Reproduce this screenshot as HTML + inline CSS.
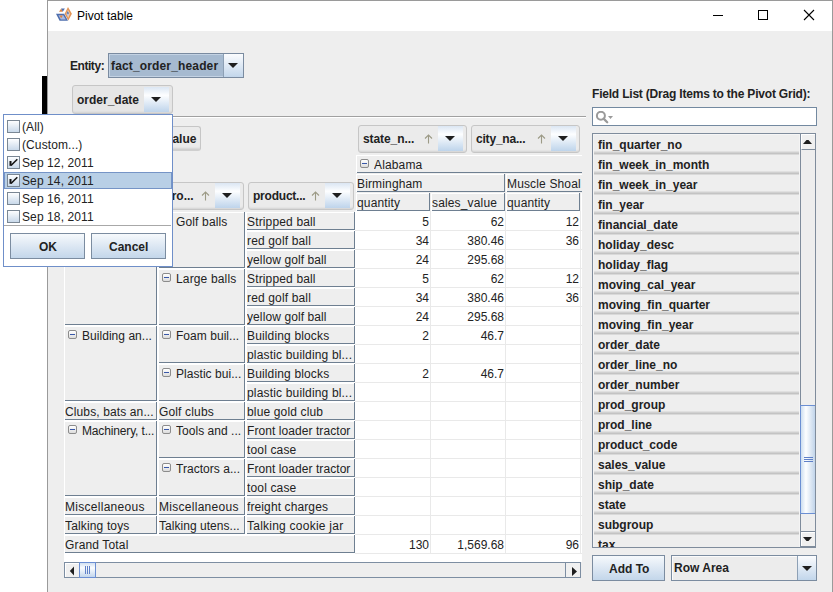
<!DOCTYPE html>
<html><head><meta charset="utf-8">
<style>
*{box-sizing:border-box;margin:0;padding:0}
html,body{width:833px;height:592px;overflow:hidden;background:#fff;font-family:"Liberation Sans",sans-serif;font-size:12px;color:#222}
.a{position:absolute}
.t{position:absolute;white-space:nowrap;line-height:14px}
.b{font-weight:bold}
#win{left:47px;top:0;width:786px;height:600px;border:1px solid #9a9a9a;border-bottom:none;background:#fff}
#content{left:48px;top:31px;width:784px;height:561px;background:#eeeeee}
.fbtn{position:absolute;border:1px solid #c6c6c6;border-radius:3px;background:#ebebeb;box-shadow:inset 0 -2px 2px -1px #d2d2d2}
.arr2{position:absolute;background:linear-gradient(#fbfcfe,#c2d6eb)}
.arr{position:absolute;background:linear-gradient(#dbe6f3 0%,#fdfeff 33%,#bed4eb 100%)}
.tri{position:absolute;width:0;height:0;border-left:5px solid transparent;border-right:5px solid transparent;border-top:5px solid #1e1e1e}
.up{position:absolute;color:#8c8c78;font-size:12px}
.hc{position:absolute;background:#eeeeee;border-top:1px solid #fff;border-left:1px solid #fff;border-right:1px solid #6e7f91;border-bottom:1px solid #6e7f91;overflow:hidden;white-space:nowrap;line-height:14px}
.ex{position:absolute;width:9px;height:9px;border:1px solid #8c8c8c;border-radius:2px;background:linear-gradient(#fff,#dcdcdc)}
.ex:after{content:"";position:absolute;left:1px;top:3px;width:5px;height:1px;background:#3857a8}
.num{position:absolute;text-align:right;line-height:14px;white-space:nowrap}
.item{position:absolute;left:594px;width:205px;height:20px;background:linear-gradient(#d9d9d9 1px,#eeeeee 1px,#eeeeee 17px,#e0e0e0 17px,#e0e0e0 18px,#d0d0d0 18px,#d0d0d0 19px,#c3c3c3 19px);font-weight:bold;line-height:14px}
.item span{position:absolute;left:4px;top:4px}
.cb{position:absolute;width:13px;height:13px;border:1px solid #7a8794;background:linear-gradient(#fdfeff,#c9d9ea)}
</style></head><body>
<!-- black bar at left -->
<div class="a" style="left:42px;top:76px;width:6px;height:38px;background:#000"></div>
<div id="win" class="a"></div>
<div id="content" class="a"></div>

<!-- title bar -->
<svg class="a" style="left:55px;top:6px" width="18" height="16" viewBox="0 0 18 16">
 <polygon points="1,7.8 9.2,7.8 13,14.8 4.6,14.8" fill="#4f6fae"/>
 <polygon points="3.4,9.2 8.3,9.2 10.8,13.5 5.8,13.5" fill="#a9b9df"/>
 <polygon points="4.6,9.6 7.8,9.6 6.2,12.3" fill="#e0823e"/>
 <polygon points="13,1.1 16.9,7.8 13.3,14.5 9.6,7.8" fill="#e39456"/>
 <polygon points="13,3.8 15,7.8 13.2,12 11.2,7.8" fill="#f6d2b0"/>
 <polygon points="11.5,7.8 14.2,7.8 12.8,5" fill="#5071b0"/>
 <polygon points="11.7,8.1 14,8.1 12.8,10.6" fill="#b4c2e6"/>
 <polygon points="4,5.8 6.2,2.6 7.8,5.8" fill="#e0843f"/>
 <polygon points="6.1,2.6 9.9,2.6 7.8,5.8" fill="#5071b0"/>
</svg>
<div class="t" style="left:77px;top:9px;font-size:12px;color:#000">Pivot table</div>
<div class="a" style="left:713px;top:15px;width:10px;height:1px;background:#000"></div>
<div class="a" style="left:758px;top:10px;width:10px;height:10px;border:1px solid #000"></div>
<svg class="a" style="left:803px;top:9px" width="12" height="12" viewBox="0 0 12 12"><path d="M1 1 L11 11 M11 1 L1 11" stroke="#000" stroke-width="1.1"/></svg>

<!-- Entity -->
<div class="t b" style="left:70px;top:59px;letter-spacing:-0.45px">Entity:</div>
<div class="a" style="left:108px;top:53px;width:136px;height:25px;border:1px solid #7a8ba0;background:#a6bad0;box-shadow:inset 0 0 0 1px #c3d2e3"></div>
<div class="arr2" style="left:223px;top:54px;width:20px;height:23px;border-left:1px solid #8da0b5"></div>
<div class="tri" style="left:228px;top:63px"></div>
<div class="t b" style="left:111px;top:59px;letter-spacing:0.15px">fact_order_header</div>

<!-- order_date filter button -->
<div class="fbtn" style="left:72px;top:85px;width:101px;height:29px;background:#e6e6e6"></div>
<div class="arr" style="left:144px;top:87px;width:25px;height:25px"></div>
<div class="tri" style="left:151px;top:97px"></div>
<div class="t b" style="left:77px;top:93px">order_date</div>

<!-- separator line -->
<div class="a" style="left:48px;top:116px;width:538px;height:1px;background:#a0a0a0"></div>
<div class="a" style="left:48px;top:117px;width:538px;height:1px;background:#fff"></div>

<!-- data field button (hidden partly) -->
<div class="fbtn" style="left:110px;top:126px;width:91px;height:25px;border-bottom:2px solid #cfcfcf"></div>
<div class="t b" style="left:129px;top:132px">sales_value</div>

<!-- column field buttons -->
<div class="fbtn" style="left:358px;top:125px;width:109px;height:28px"></div>
<div class="arr" style="left:438px;top:126px;width:25px;height:25px"></div>
<div class="tri" style="left:445px;top:136px"></div>
<div class="t b" style="left:363px;top:132px;letter-spacing:-0.08px">state_n...</div>
<svg class="a" style="left:424px;top:134px" width="9" height="10" viewBox="0 0 9 10"><path d="M4.5 1 L4.5 9.5 M1 4.5 L4.5 1 L8 4.5" fill="none" stroke="#9c9a86" stroke-width="1.1"/></svg>

<div class="fbtn" style="left:471px;top:125px;width:109px;height:28px"></div>
<div class="arr" style="left:551px;top:126px;width:25px;height:25px"></div>
<div class="tri" style="left:558px;top:136px"></div>
<div class="t b" style="left:476px;top:132px;letter-spacing:-0.2px">city_na...</div>
<svg class="a" style="left:537px;top:134px" width="9" height="10" viewBox="0 0 9 10"><path d="M4.5 1 L4.5 9.5 M1 4.5 L4.5 1 L8 4.5" fill="none" stroke="#9c9a86" stroke-width="1.1"/></svg>

<!-- row field buttons -->
<div class="fbtn" style="left:138px;top:182px;width:106px;height:28px"></div>
<div class="arr" style="left:215px;top:183px;width:25px;height:25px"></div>
<div class="tri" style="left:222px;top:193px"></div>
<div class="t b" style="left:143px;top:189px">subgro...</div>
<svg class="a" style="left:201px;top:191px" width="9" height="10" viewBox="0 0 9 10"><path d="M4.5 1 L4.5 9.5 M1 4.5 L4.5 1 L8 4.5" fill="none" stroke="#9c9a86" stroke-width="1.1"/></svg>

<div class="fbtn" style="left:248px;top:182px;width:106px;height:28px"></div>
<div class="arr" style="left:325px;top:183px;width:25px;height:25px"></div>
<div class="tri" style="left:332px;top:193px"></div>
<div class="t b" style="left:253px;top:189px;letter-spacing:-0.22px">product...</div>
<svg class="a" style="left:311px;top:191px" width="9" height="10" viewBox="0 0 9 10"><path d="M4.5 1 L4.5 9.5 M1 4.5 L4.5 1 L8 4.5" fill="none" stroke="#9c9a86" stroke-width="1.1"/></svg>

<div class="a" style="left:64px;top:211px;width:518px;height:351px;background:#fff"></div><div class="a" style="left:355px;top:230px;width:227px;height:1px;background:#e9e9e9"></div><div class="a" style="left:355px;top:249px;width:227px;height:1px;background:#e9e9e9"></div><div class="a" style="left:355px;top:268px;width:227px;height:1px;background:#e9e9e9"></div><div class="a" style="left:355px;top:287px;width:227px;height:1px;background:#e9e9e9"></div><div class="a" style="left:355px;top:306px;width:227px;height:1px;background:#e9e9e9"></div><div class="a" style="left:355px;top:325px;width:227px;height:1px;background:#e9e9e9"></div><div class="a" style="left:355px;top:344px;width:227px;height:1px;background:#e9e9e9"></div><div class="a" style="left:355px;top:363px;width:227px;height:1px;background:#e9e9e9"></div><div class="a" style="left:355px;top:382px;width:227px;height:1px;background:#e9e9e9"></div><div class="a" style="left:355px;top:401px;width:227px;height:1px;background:#e9e9e9"></div><div class="a" style="left:355px;top:420px;width:227px;height:1px;background:#e9e9e9"></div><div class="a" style="left:355px;top:439px;width:227px;height:1px;background:#e9e9e9"></div><div class="a" style="left:355px;top:458px;width:227px;height:1px;background:#e9e9e9"></div><div class="a" style="left:355px;top:477px;width:227px;height:1px;background:#e9e9e9"></div><div class="a" style="left:355px;top:496px;width:227px;height:1px;background:#e9e9e9"></div><div class="a" style="left:355px;top:515px;width:227px;height:1px;background:#e9e9e9"></div><div class="a" style="left:355px;top:534px;width:227px;height:1px;background:#e9e9e9"></div><div class="a" style="left:355px;top:553px;width:227px;height:1px;background:#e9e9e9"></div><div class="a" style="left:430px;top:211px;width:1px;height:343px;background:#e9e9e9"></div><div class="a" style="left:505px;top:211px;width:1px;height:343px;background:#e9e9e9"></div><div class="a" style="left:580px;top:211px;width:1px;height:343px;background:#e9e9e9"></div><div class="a" style="left:355px;top:154px;width:227px;height:57px;overflow:hidden"><div class="a" style="left:1px;top:1px;width:299px;height:18px;background:#fff"></div><div class="a" style="left:2px;top:1px;width:298px;height:18px;background:#6e7f91"></div><div class="a" style="left:2px;top:1px;width:297px;height:1px;background:#fff"></div><div class="a" style="left:2px;top:2px;width:297px;height:16px;background:#eeeeee"></div><div class="ex" style="left:5px;top:5px"></div><div class="t" style="left:19px;top:4px;width:280px;overflow:hidden;letter-spacing:0.15px">Alabama</div><div class="a" style="left:1px;top:20px;width:149px;height:18px;background:#fff"></div><div class="a" style="left:2px;top:20px;width:148px;height:18px;background:#6e7f91"></div><div class="a" style="left:2px;top:20px;width:147px;height:1px;background:#fff"></div><div class="a" style="left:2px;top:21px;width:147px;height:16px;background:#eeeeee"></div><div class="t" style="left:2px;top:23px;width:147px;overflow:hidden;letter-spacing:0.15px">Birmingham</div><div class="a" style="left:151px;top:20px;width:149px;height:18px;background:#fff"></div><div class="a" style="left:152px;top:20px;width:148px;height:18px;background:#6e7f91"></div><div class="a" style="left:152px;top:20px;width:147px;height:1px;background:#fff"></div><div class="a" style="left:152px;top:21px;width:147px;height:16px;background:#eeeeee"></div><div class="t" style="left:152px;top:23px;width:147px;overflow:hidden;letter-spacing:0.15px">Muscle Shoal</div><div class="a" style="left:1px;top:39px;width:74px;height:18px;background:#fff"></div><div class="a" style="left:2px;top:39px;width:73px;height:18px;background:#6e7f91"></div><div class="a" style="left:2px;top:39px;width:72px;height:1px;background:#fff"></div><div class="a" style="left:2px;top:40px;width:72px;height:16px;background:#eeeeee"></div><div class="t" style="left:2px;top:42px;width:72px;overflow:hidden;letter-spacing:0.15px">quantity</div><div class="a" style="left:76px;top:39px;width:74px;height:18px;background:#fff"></div><div class="a" style="left:77px;top:39px;width:73px;height:18px;background:#6e7f91"></div><div class="a" style="left:77px;top:39px;width:72px;height:1px;background:#fff"></div><div class="a" style="left:77px;top:40px;width:72px;height:16px;background:#eeeeee"></div><div class="t" style="left:77px;top:42px;width:72px;overflow:hidden;letter-spacing:0.15px">sales_value</div><div class="a" style="left:151px;top:39px;width:74px;height:18px;background:#fff"></div><div class="a" style="left:152px;top:39px;width:73px;height:18px;background:#6e7f91"></div><div class="a" style="left:152px;top:39px;width:72px;height:1px;background:#fff"></div><div class="a" style="left:152px;top:40px;width:72px;height:16px;background:#eeeeee"></div><div class="t" style="left:152px;top:42px;width:72px;overflow:hidden;letter-spacing:0.15px">quantity</div><div class="a" style="left:226px;top:39px;width:74px;height:18px;background:#fff"></div><div class="a" style="left:227px;top:39px;width:73px;height:18px;background:#6e7f91"></div><div class="a" style="left:227px;top:39px;width:72px;height:1px;background:#fff"></div><div class="a" style="left:227px;top:40px;width:72px;height:16px;background:#eeeeee"></div><div class="t" style="left:227px;top:42px;width:72px;overflow:hidden;letter-spacing:0.15px">sales_value</div></div><div class="a" style="left:64px;top:212px;width:93px;height:113px;background:#fff"></div><div class="a" style="left:65px;top:212px;width:92px;height:113px;background:#6e7f91"></div><div class="a" style="left:65px;top:212px;width:91px;height:1px;background:#fff"></div><div class="a" style="left:65px;top:213px;width:91px;height:111px;background:#eeeeee"></div><div class="ex" style="left:68px;top:216px"></div><div class="t" style="left:82px;top:215px;width:74px;overflow:hidden;letter-spacing:0.15px">Balls</div><div class="a" style="left:64px;top:326px;width:93px;height:75px;background:#fff"></div><div class="a" style="left:65px;top:326px;width:92px;height:75px;background:#6e7f91"></div><div class="a" style="left:65px;top:326px;width:91px;height:1px;background:#fff"></div><div class="a" style="left:65px;top:327px;width:91px;height:73px;background:#eeeeee"></div><div class="ex" style="left:68px;top:330px"></div><div class="t" style="left:82px;top:329px;width:74px;overflow:hidden;letter-spacing:0.04px">Building an...</div><div class="a" style="left:64px;top:402px;width:93px;height:18px;background:#fff"></div><div class="a" style="left:65px;top:402px;width:92px;height:18px;background:#6e7f91"></div><div class="a" style="left:65px;top:402px;width:91px;height:1px;background:#fff"></div><div class="a" style="left:65px;top:403px;width:91px;height:16px;background:#eeeeee"></div><div class="t" style="left:65px;top:405px;width:91px;overflow:hidden;letter-spacing:0.12px">Clubs, bats an...</div><div class="a" style="left:64px;top:421px;width:93px;height:75px;background:#fff"></div><div class="a" style="left:65px;top:421px;width:92px;height:75px;background:#6e7f91"></div><div class="a" style="left:65px;top:421px;width:91px;height:1px;background:#fff"></div><div class="a" style="left:65px;top:422px;width:91px;height:73px;background:#eeeeee"></div><div class="ex" style="left:68px;top:425px"></div><div class="t" style="left:82px;top:424px;width:74px;overflow:hidden;letter-spacing:-0.15px">Machinery, t...</div><div class="a" style="left:64px;top:497px;width:93px;height:18px;background:#fff"></div><div class="a" style="left:65px;top:497px;width:92px;height:18px;background:#6e7f91"></div><div class="a" style="left:65px;top:497px;width:91px;height:1px;background:#fff"></div><div class="a" style="left:65px;top:498px;width:91px;height:16px;background:#eeeeee"></div><div class="t" style="left:65px;top:500px;width:91px;overflow:hidden;letter-spacing:0.28px">Miscellaneous</div><div class="a" style="left:64px;top:516px;width:93px;height:18px;background:#fff"></div><div class="a" style="left:65px;top:516px;width:92px;height:18px;background:#6e7f91"></div><div class="a" style="left:65px;top:516px;width:91px;height:1px;background:#fff"></div><div class="a" style="left:65px;top:517px;width:91px;height:16px;background:#eeeeee"></div><div class="t" style="left:65px;top:519px;width:91px;overflow:hidden;letter-spacing:0.15px">Talking toys</div><div class="a" style="left:158px;top:212px;width:87px;height:56px;background:#fff"></div><div class="a" style="left:159px;top:212px;width:86px;height:56px;background:#6e7f91"></div><div class="a" style="left:159px;top:212px;width:85px;height:1px;background:#fff"></div><div class="a" style="left:159px;top:213px;width:85px;height:54px;background:#eeeeee"></div><div class="ex" style="left:162px;top:216px"></div><div class="t" style="left:176px;top:215px;width:68px;overflow:hidden;letter-spacing:0.15px">Golf balls</div><div class="a" style="left:158px;top:269px;width:87px;height:56px;background:#fff"></div><div class="a" style="left:159px;top:269px;width:86px;height:56px;background:#6e7f91"></div><div class="a" style="left:159px;top:269px;width:85px;height:1px;background:#fff"></div><div class="a" style="left:159px;top:270px;width:85px;height:54px;background:#eeeeee"></div><div class="ex" style="left:162px;top:273px"></div><div class="t" style="left:176px;top:272px;width:68px;overflow:hidden;letter-spacing:0.15px">Large balls</div><div class="a" style="left:158px;top:326px;width:87px;height:37px;background:#fff"></div><div class="a" style="left:159px;top:326px;width:86px;height:37px;background:#6e7f91"></div><div class="a" style="left:159px;top:326px;width:85px;height:1px;background:#fff"></div><div class="a" style="left:159px;top:327px;width:85px;height:35px;background:#eeeeee"></div><div class="ex" style="left:162px;top:330px"></div><div class="t" style="left:176px;top:329px;width:68px;overflow:hidden;letter-spacing:0.04px">Foam buil...</div><div class="a" style="left:158px;top:364px;width:87px;height:37px;background:#fff"></div><div class="a" style="left:159px;top:364px;width:86px;height:37px;background:#6e7f91"></div><div class="a" style="left:159px;top:364px;width:85px;height:1px;background:#fff"></div><div class="a" style="left:159px;top:365px;width:85px;height:35px;background:#eeeeee"></div><div class="ex" style="left:162px;top:368px"></div><div class="t" style="left:176px;top:367px;width:68px;overflow:hidden;letter-spacing:0.04px">Plastic bui...</div><div class="a" style="left:158px;top:402px;width:87px;height:18px;background:#fff"></div><div class="a" style="left:159px;top:402px;width:86px;height:18px;background:#6e7f91"></div><div class="a" style="left:159px;top:402px;width:85px;height:1px;background:#fff"></div><div class="a" style="left:159px;top:403px;width:85px;height:16px;background:#eeeeee"></div><div class="t" style="left:159px;top:405px;width:85px;overflow:hidden;letter-spacing:0.15px">Golf clubs</div><div class="a" style="left:158px;top:421px;width:87px;height:37px;background:#fff"></div><div class="a" style="left:159px;top:421px;width:86px;height:37px;background:#6e7f91"></div><div class="a" style="left:159px;top:421px;width:85px;height:1px;background:#fff"></div><div class="a" style="left:159px;top:422px;width:85px;height:35px;background:#eeeeee"></div><div class="ex" style="left:162px;top:425px"></div><div class="t" style="left:176px;top:424px;width:68px;overflow:hidden;letter-spacing:0.04px">Tools and ...</div><div class="a" style="left:158px;top:459px;width:87px;height:37px;background:#fff"></div><div class="a" style="left:159px;top:459px;width:86px;height:37px;background:#6e7f91"></div><div class="a" style="left:159px;top:459px;width:85px;height:1px;background:#fff"></div><div class="a" style="left:159px;top:460px;width:85px;height:35px;background:#eeeeee"></div><div class="ex" style="left:162px;top:463px"></div><div class="t" style="left:176px;top:462px;width:68px;overflow:hidden;letter-spacing:0.04px">Tractors a...</div><div class="a" style="left:158px;top:497px;width:87px;height:18px;background:#fff"></div><div class="a" style="left:159px;top:497px;width:86px;height:18px;background:#6e7f91"></div><div class="a" style="left:159px;top:497px;width:85px;height:1px;background:#fff"></div><div class="a" style="left:159px;top:498px;width:85px;height:16px;background:#eeeeee"></div><div class="t" style="left:159px;top:500px;width:85px;overflow:hidden;letter-spacing:0.28px">Miscellaneous</div><div class="a" style="left:158px;top:516px;width:87px;height:18px;background:#fff"></div><div class="a" style="left:159px;top:516px;width:86px;height:18px;background:#6e7f91"></div><div class="a" style="left:159px;top:516px;width:85px;height:1px;background:#fff"></div><div class="a" style="left:159px;top:517px;width:85px;height:16px;background:#eeeeee"></div><div class="t" style="left:159px;top:519px;width:85px;overflow:hidden;letter-spacing:0.04px">Talking utens...</div><div class="a" style="left:246px;top:212px;width:109px;height:18px;background:#fff"></div><div class="a" style="left:247px;top:212px;width:108px;height:18px;background:#6e7f91"></div><div class="a" style="left:247px;top:212px;width:107px;height:1px;background:#fff"></div><div class="a" style="left:247px;top:213px;width:107px;height:16px;background:#eeeeee"></div><div class="t" style="left:247px;top:215px;width:107px;overflow:hidden;letter-spacing:0.15px">Stripped ball</div><div class="a" style="left:246px;top:231px;width:109px;height:18px;background:#fff"></div><div class="a" style="left:247px;top:231px;width:108px;height:18px;background:#6e7f91"></div><div class="a" style="left:247px;top:231px;width:107px;height:1px;background:#fff"></div><div class="a" style="left:247px;top:232px;width:107px;height:16px;background:#eeeeee"></div><div class="t" style="left:247px;top:234px;width:107px;overflow:hidden;letter-spacing:0.15px">red golf ball</div><div class="a" style="left:246px;top:250px;width:109px;height:18px;background:#fff"></div><div class="a" style="left:247px;top:250px;width:108px;height:18px;background:#6e7f91"></div><div class="a" style="left:247px;top:250px;width:107px;height:1px;background:#fff"></div><div class="a" style="left:247px;top:251px;width:107px;height:16px;background:#eeeeee"></div><div class="t" style="left:247px;top:253px;width:107px;overflow:hidden;letter-spacing:0.1px">yellow golf ball</div><div class="a" style="left:246px;top:269px;width:109px;height:18px;background:#fff"></div><div class="a" style="left:247px;top:269px;width:108px;height:18px;background:#6e7f91"></div><div class="a" style="left:247px;top:269px;width:107px;height:1px;background:#fff"></div><div class="a" style="left:247px;top:270px;width:107px;height:16px;background:#eeeeee"></div><div class="t" style="left:247px;top:272px;width:107px;overflow:hidden;letter-spacing:0.15px">Stripped ball</div><div class="a" style="left:246px;top:288px;width:109px;height:18px;background:#fff"></div><div class="a" style="left:247px;top:288px;width:108px;height:18px;background:#6e7f91"></div><div class="a" style="left:247px;top:288px;width:107px;height:1px;background:#fff"></div><div class="a" style="left:247px;top:289px;width:107px;height:16px;background:#eeeeee"></div><div class="t" style="left:247px;top:291px;width:107px;overflow:hidden;letter-spacing:0.15px">red golf ball</div><div class="a" style="left:246px;top:307px;width:109px;height:18px;background:#fff"></div><div class="a" style="left:247px;top:307px;width:108px;height:18px;background:#6e7f91"></div><div class="a" style="left:247px;top:307px;width:107px;height:1px;background:#fff"></div><div class="a" style="left:247px;top:308px;width:107px;height:16px;background:#eeeeee"></div><div class="t" style="left:247px;top:310px;width:107px;overflow:hidden;letter-spacing:0.1px">yellow golf ball</div><div class="a" style="left:246px;top:326px;width:109px;height:18px;background:#fff"></div><div class="a" style="left:247px;top:326px;width:108px;height:18px;background:#6e7f91"></div><div class="a" style="left:247px;top:326px;width:107px;height:1px;background:#fff"></div><div class="a" style="left:247px;top:327px;width:107px;height:16px;background:#eeeeee"></div><div class="t" style="left:247px;top:329px;width:107px;overflow:hidden;letter-spacing:0.15px">Building blocks</div><div class="a" style="left:246px;top:345px;width:109px;height:18px;background:#fff"></div><div class="a" style="left:247px;top:345px;width:108px;height:18px;background:#6e7f91"></div><div class="a" style="left:247px;top:345px;width:107px;height:1px;background:#fff"></div><div class="a" style="left:247px;top:346px;width:107px;height:16px;background:#eeeeee"></div><div class="t" style="left:247px;top:348px;width:107px;overflow:hidden;letter-spacing:0.17px">plastic building bl...</div><div class="a" style="left:246px;top:364px;width:109px;height:18px;background:#fff"></div><div class="a" style="left:247px;top:364px;width:108px;height:18px;background:#6e7f91"></div><div class="a" style="left:247px;top:364px;width:107px;height:1px;background:#fff"></div><div class="a" style="left:247px;top:365px;width:107px;height:16px;background:#eeeeee"></div><div class="t" style="left:247px;top:367px;width:107px;overflow:hidden;letter-spacing:0.15px">Building blocks</div><div class="a" style="left:246px;top:383px;width:109px;height:18px;background:#fff"></div><div class="a" style="left:247px;top:383px;width:108px;height:18px;background:#6e7f91"></div><div class="a" style="left:247px;top:383px;width:107px;height:1px;background:#fff"></div><div class="a" style="left:247px;top:384px;width:107px;height:16px;background:#eeeeee"></div><div class="t" style="left:247px;top:386px;width:107px;overflow:hidden;letter-spacing:0.17px">plastic building bl...</div><div class="a" style="left:246px;top:402px;width:109px;height:18px;background:#fff"></div><div class="a" style="left:247px;top:402px;width:108px;height:18px;background:#6e7f91"></div><div class="a" style="left:247px;top:402px;width:107px;height:1px;background:#fff"></div><div class="a" style="left:247px;top:403px;width:107px;height:16px;background:#eeeeee"></div><div class="t" style="left:247px;top:405px;width:107px;overflow:hidden;letter-spacing:0.15px">blue gold club</div><div class="a" style="left:246px;top:421px;width:109px;height:18px;background:#fff"></div><div class="a" style="left:247px;top:421px;width:108px;height:18px;background:#6e7f91"></div><div class="a" style="left:247px;top:421px;width:107px;height:1px;background:#fff"></div><div class="a" style="left:247px;top:422px;width:107px;height:16px;background:#eeeeee"></div><div class="t" style="left:247px;top:424px;width:107px;overflow:hidden;letter-spacing:0.07px">Front loader tractor</div><div class="a" style="left:246px;top:440px;width:109px;height:18px;background:#fff"></div><div class="a" style="left:247px;top:440px;width:108px;height:18px;background:#6e7f91"></div><div class="a" style="left:247px;top:440px;width:107px;height:1px;background:#fff"></div><div class="a" style="left:247px;top:441px;width:107px;height:16px;background:#eeeeee"></div><div class="t" style="left:247px;top:443px;width:107px;overflow:hidden;letter-spacing:0.15px">tool case</div><div class="a" style="left:246px;top:459px;width:109px;height:18px;background:#fff"></div><div class="a" style="left:247px;top:459px;width:108px;height:18px;background:#6e7f91"></div><div class="a" style="left:247px;top:459px;width:107px;height:1px;background:#fff"></div><div class="a" style="left:247px;top:460px;width:107px;height:16px;background:#eeeeee"></div><div class="t" style="left:247px;top:462px;width:107px;overflow:hidden;letter-spacing:0.07px">Front loader tractor</div><div class="a" style="left:246px;top:478px;width:109px;height:18px;background:#fff"></div><div class="a" style="left:247px;top:478px;width:108px;height:18px;background:#6e7f91"></div><div class="a" style="left:247px;top:478px;width:107px;height:1px;background:#fff"></div><div class="a" style="left:247px;top:479px;width:107px;height:16px;background:#eeeeee"></div><div class="t" style="left:247px;top:481px;width:107px;overflow:hidden;letter-spacing:0.15px">tool case</div><div class="a" style="left:246px;top:497px;width:109px;height:18px;background:#fff"></div><div class="a" style="left:247px;top:497px;width:108px;height:18px;background:#6e7f91"></div><div class="a" style="left:247px;top:497px;width:107px;height:1px;background:#fff"></div><div class="a" style="left:247px;top:498px;width:107px;height:16px;background:#eeeeee"></div><div class="t" style="left:247px;top:500px;width:107px;overflow:hidden;letter-spacing:0.11px">freight charges</div><div class="a" style="left:246px;top:516px;width:109px;height:18px;background:#fff"></div><div class="a" style="left:247px;top:516px;width:108px;height:18px;background:#6e7f91"></div><div class="a" style="left:247px;top:516px;width:107px;height:1px;background:#fff"></div><div class="a" style="left:247px;top:517px;width:107px;height:16px;background:#eeeeee"></div><div class="t" style="left:247px;top:519px;width:107px;overflow:hidden;letter-spacing:0.24px">Talking cookie jar</div><div class="a" style="left:64px;top:535px;width:291px;height:18px;background:#fff"></div><div class="a" style="left:65px;top:535px;width:290px;height:18px;background:#6e7f91"></div><div class="a" style="left:65px;top:535px;width:289px;height:1px;background:#fff"></div><div class="a" style="left:65px;top:536px;width:289px;height:16px;background:#eeeeee"></div><div class="t" style="left:65px;top:538px;width:289px;overflow:hidden;letter-spacing:0.15px">Grand Total</div><div class="a" style="left:63px;top:211px;width:292px;height:1px;background:#eeeeee"></div><div class="a" style="left:63px;top:211px;width:1px;height:343px;background:#eeeeee"></div><div class="num" style="left:355px;top:215px;width:74px">5</div><div class="num" style="left:430px;top:215px;width:74px">62</div><div class="num" style="left:505px;top:215px;width:74px">12</div><div class="num" style="left:355px;top:234px;width:74px">34</div><div class="num" style="left:430px;top:234px;width:74px">380.46</div><div class="num" style="left:505px;top:234px;width:74px">36</div><div class="num" style="left:355px;top:253px;width:74px">24</div><div class="num" style="left:430px;top:253px;width:74px">295.68</div><div class="num" style="left:355px;top:272px;width:74px">5</div><div class="num" style="left:430px;top:272px;width:74px">62</div><div class="num" style="left:505px;top:272px;width:74px">12</div><div class="num" style="left:355px;top:291px;width:74px">34</div><div class="num" style="left:430px;top:291px;width:74px">380.46</div><div class="num" style="left:505px;top:291px;width:74px">36</div><div class="num" style="left:355px;top:310px;width:74px">24</div><div class="num" style="left:430px;top:310px;width:74px">295.68</div><div class="num" style="left:355px;top:329px;width:74px">2</div><div class="num" style="left:430px;top:329px;width:74px">46.7</div><div class="num" style="left:355px;top:367px;width:74px">2</div><div class="num" style="left:430px;top:367px;width:74px">46.7</div><div class="num" style="left:355px;top:538px;width:74px">130</div><div class="num" style="left:430px;top:538px;width:74px">1,569.68</div><div class="num" style="left:505px;top:538px;width:74px">96</div><!-- horizontal scrollbar -->
<div class="a" style="left:64px;top:562px;width:517px;height:16px;background:#eeeeee;border:1px solid #7d8ea2"></div>
<div class="a" style="left:65px;top:563px;width:14px;height:14px;background:#f0f0f0;border-top:1px solid #fff;border-left:1px solid #fff"></div>
<svg class="a" style="left:69px;top:566px" width="6" height="10"><polygon points="5,0.5 5,9.5 0.8,5" fill="#1e1e1e"/></svg>
<div class="a" style="left:79px;top:562px;width:17px;height:16px;border:1px solid #6b8fd3;background:linear-gradient(#d3e1f1,#fbfdff 35%,#c3d6ec)"></div>
<div class="a" style="left:85px;top:566px;width:1px;height:8px;background:#5f80c8"></div>
<div class="a" style="left:87px;top:566px;width:1px;height:8px;background:#5f80c8"></div>
<div class="a" style="left:89px;top:566px;width:1px;height:8px;background:#5f80c8"></div>
<div class="a" style="left:565px;top:562px;width:16px;height:16px;background:#f0f0f0;border:1px solid #7d8ea2"></div>
<svg class="a" style="left:572px;top:567px" width="6" height="10"><polygon points="0,0 0,9 5,4.5" fill="#1e1e1e"/></svg>

<!-- right panel -->
<div class="t b" style="left:592px;top:87px;letter-spacing:-0.2px">Field List (Drag Items to the Pivot Grid):</div>
<div class="a" style="left:592px;top:107px;width:225px;height:19px;border:1px solid #7389a0;background:#fff"></div>
<svg class="a" style="left:595px;top:111px" width="20" height="14" viewBox="0 0 20 14">
 <circle cx="5.9" cy="4.8" r="4" fill="none" stroke="#9a9a9a" stroke-width="2"/>
 <path d="M8.6 7.6 L12.2 11.2" stroke="#9a9a9a" stroke-width="2.3" stroke-linecap="round"/>
 <polygon points="13,5 18,5 15.5,8" fill="#9a9a9a"/>
</svg>
<div class="a" style="left:592px;top:133px;width:224px;height:415px;border:1px solid #7f8c9c;background:#f4f4f4"></div>
<div class="a" style="left:593px;top:134px;width:207px;height:413px;overflow:hidden"><div class="item" style="left:1px;top:0px"><span>fin_quarter_no</span></div><div class="item" style="left:1px;top:20px"><span>fin_week_in_month</span></div><div class="item" style="left:1px;top:40px"><span>fin_week_in_year</span></div><div class="item" style="left:1px;top:60px"><span>fin_year</span></div><div class="item" style="left:1px;top:80px"><span>financial_date</span></div><div class="item" style="left:1px;top:100px"><span>holiday_desc</span></div><div class="item" style="left:1px;top:120px"><span>holiday_flag</span></div><div class="item" style="left:1px;top:140px"><span>moving_cal_year</span></div><div class="item" style="left:1px;top:160px"><span>moving_fin_quarter</span></div><div class="item" style="left:1px;top:180px"><span>moving_fin_year</span></div><div class="item" style="left:1px;top:200px"><span>order_date</span></div><div class="item" style="left:1px;top:220px"><span>order_line_no</span></div><div class="item" style="left:1px;top:240px"><span>order_number</span></div><div class="item" style="left:1px;top:260px"><span>prod_group</span></div><div class="item" style="left:1px;top:280px"><span>prod_line</span></div><div class="item" style="left:1px;top:300px"><span>product_code</span></div><div class="item" style="left:1px;top:320px"><span>sales_value</span></div><div class="item" style="left:1px;top:340px"><span>ship_date</span></div><div class="item" style="left:1px;top:360px"><span>state</span></div><div class="item" style="left:1px;top:380px"><span>subgroup</span></div><div class="item" style="left:1px;top:400px"><span>tax</span></div><div class="a" style="left:1px;top:0;width:205px;height:1px;background:#f6f6f6"></div></div>
<!-- vertical scrollbar -->
<div class="a" style="left:800px;top:134px;width:15px;height:413px;background:#eeeeee;border-left:1px solid #7f8c9c"></div>
<div class="a" style="left:801px;top:134px;width:14px;height:16px;background:#f0f0f0;border-bottom:1px solid #7f8c9c;border-top:1px solid #fff;border-left:1px solid #fff"></div>
<svg class="a" style="left:803px;top:139px" width="10" height="6"><polygon points="0,5 9,5 5.5,1 3.5,1" fill="#1e1e1e"/></svg>
<div class="a" style="left:800px;top:405px;width:15px;height:109px;border:1px solid #6b8fd3;border-right:none;background:linear-gradient(90deg,#cddef0,#fdfeff 35%,#c1d4ea)"></div>
<div class="a" style="left:804px;top:457px;width:9px;height:1px;background:#5f80c8"></div>
<div class="a" style="left:804px;top:459px;width:9px;height:1px;background:#5f80c8"></div>
<div class="a" style="left:804px;top:461px;width:9px;height:1px;background:#5f80c8"></div>
<div class="a" style="left:801px;top:531px;width:14px;height:16px;background:#f0f0f0;border-top:1px solid #7f8c9c;border-bottom:1px solid #7f8c9c;box-shadow:inset 1px 1px 0 #fff"></div>
<svg class="a" style="left:803px;top:537px" width="10" height="6"><polygon points="0,0 9,0 5.5,4 3.5,4" fill="#1e1e1e"/></svg>

<!-- Add To / Row Area -->
<div class="a" style="left:592px;top:555px;width:73px;height:26px;border:1px solid #7b8ca0;background:linear-gradient(#f6f9fc,#c3d6ea)"></div>
<div class="t b" style="left:609px;top:562px">Add To</div>
<div class="a" style="left:671px;top:555px;width:146px;height:26px;border:1px solid #7b8ca0;background:#ececec;box-shadow:inset 1px 1px 0 #fbfbfb"></div>
<div class="arr2" style="left:797px;top:556px;width:19px;height:24px;border-left:1px solid #8da0b5"></div>
<div class="tri" style="left:802px;top:566px"></div>
<div class="t b" style="left:674px;top:561px">Row Area</div>

<!-- popup -->
<div class="a" style="left:3px;top:114px;width:170px;height:153px;border:1px solid #6f8fc9;background:#fff"></div>
<div class="a" style="left:4px;top:172px;width:168px;height:17px;border:1px solid #7594c6;background:#b8cfe6"></div>
<div class="cb" style="left:7px;top:120px"></div><div class="t" style="left:22px;top:120px;letter-spacing:0.1px">(All)</div><div class="cb" style="left:7px;top:138px"></div><div class="t" style="left:22px;top:138px;letter-spacing:0.1px">(Custom...)</div><div class="cb" style="left:7px;top:156px"></div><svg class="a" style="left:7px;top:156px" width="13" height="13" viewBox="0 0 13 13"><path d="M3.5 5 L3.5 9.8" stroke="#151515" stroke-width="2"/><path d="M4 9.5 L10.3 3.2" stroke="#151515" stroke-width="1.6"/></svg><div class="t" style="left:22px;top:156px;letter-spacing:0.1px">Sep 12, 2011</div><div class="cb" style="left:7px;top:174px"></div><svg class="a" style="left:7px;top:174px" width="13" height="13" viewBox="0 0 13 13"><path d="M3.5 5 L3.5 9.8" stroke="#151515" stroke-width="2"/><path d="M4 9.5 L10.3 3.2" stroke="#151515" stroke-width="1.6"/></svg><div class="t" style="left:22px;top:174px;letter-spacing:0.1px">Sep 14, 2011</div><div class="cb" style="left:7px;top:192px"></div><div class="t" style="left:22px;top:192px;letter-spacing:0.1px">Sep 16, 2011</div><div class="cb" style="left:7px;top:210px"></div><div class="t" style="left:22px;top:210px;letter-spacing:0.1px">Sep 18, 2011</div>
<div class="a" style="left:4px;top:225px;width:167px;height:1px;background:#a8a8a8"></div>
<div class="a" style="left:10px;top:233px;width:75px;height:26px;border:1px solid #7b8ca0;background:linear-gradient(#f6f9fc,#c3d6ea)"></div>
<div class="t b" style="left:39px;top:240px">OK</div>
<div class="a" style="left:91px;top:233px;width:75px;height:26px;border:1px solid #7b8ca0;background:linear-gradient(#f6f9fc,#c3d6ea)"></div>
<div class="t b" style="left:109px;top:240px">Cancel</div>
</body></html>
